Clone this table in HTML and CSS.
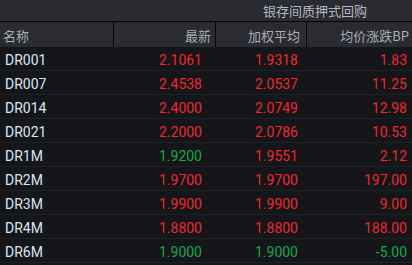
FILE: index.html
```html
<!DOCTYPE html>
<html lang="zh-CN">
<head>
<meta charset="utf-8">
<title>银存间质押式回购</title>
<link rel="stylesheet" href="styles.css">
</head>
<body>
<div class="board">
  <div class="group">
    <div class="group-blank"></div>
    <div class="group-title">银存间质押式回购</div>
  </div>
  <div class="head">
    <div class="h h-name">名称</div>
    <div class="h h-last">最新</div>
    <div class="h h-avg">加权平均</div>
    <div class="h h-bp">均价涨跌BP</div>
  </div>
  <div class="row"><div class="c name">DR001</div><div class="c last up">2.1061</div><div class="c avg up">1.9318</div><div class="c bp up">1.83</div></div>
  <div class="row"><div class="c name">DR007</div><div class="c last up">2.4538</div><div class="c avg up">2.0537</div><div class="c bp up">11.25</div></div>
  <div class="row"><div class="c name">DR014</div><div class="c last up">2.4000</div><div class="c avg up">2.0749</div><div class="c bp up">12.98</div></div>
  <div class="row"><div class="c name">DR021</div><div class="c last up">2.2000</div><div class="c avg up">2.0786</div><div class="c bp up">10.53</div></div>
  <div class="row"><div class="c name">DR1M</div><div class="c last down">1.9200</div><div class="c avg up">1.9551</div><div class="c bp up">2.12</div></div>
  <div class="row"><div class="c name">DR2M</div><div class="c last up">1.9700</div><div class="c avg up">1.9700</div><div class="c bp up">197.00</div></div>
  <div class="row"><div class="c name">DR3M</div><div class="c last up">1.9900</div><div class="c avg up">1.9900</div><div class="c bp up">9.00</div></div>
  <div class="row"><div class="c name">DR4M</div><div class="c last up">1.8800</div><div class="c avg up">1.8800</div><div class="c bp up">188.00</div></div>
  <div class="row"><div class="c name">DR6M</div><div class="c last down">1.9000</div><div class="c avg down">1.9000</div><div class="c bp down">-5.00</div></div>
</div>
</body>
</html>
```
FILE: styles.css
```css
html, body {
  margin: 0;
  padding: 0;
  background: #14161a;
}
body {
  font-family: Roboto, "Noto Sans", "Noto Sans CJK SC", sans-serif;
}
.board {
  width: 412px;
}
.group {
  display: grid;
  grid-template-columns: 215px 197px;
  height: 21px;
  background: #2a2a31;
  border-bottom: 1px solid #050506;
}
.group-title {
  font-family: "Noto Sans CJK SC", sans-serif;
  font-size: 13px;
  line-height: 21px;
  color: #b3b9c0;
  text-align: center;
  padding-left: 3px;
}
.head {
  display: grid;
  grid-template-columns: 113px 102px 91px 106px;
  height: 25px;
  background: #2b2b32;
}
.h {
  font-family: "Noto Sans CJK SC", sans-serif;
  font-size: 13px;
  line-height: 23px;
  padding-top: 2px;
  color: #a7aeb6;
  text-align: right;
  border-left: 1px solid #050506;
}
.h-name {
  border-left: none;
  text-align: left;
  padding-left: 3px;
}
.h-last { padding-right: 4px; }
.h-avg { padding-right: 6px; }
.h-bp { padding-right: 3px; }
.row {
  display: grid;
  grid-template-columns: 113px 102px 91px 106px;
  height: 24px;
  box-sizing: border-box;
  border-bottom: 1px solid #1e2126;
}
.c {
  font-size: 14px;
  line-height: 19px;
  padding-top: 4px;
  text-align: right;
  white-space: nowrap;
}
.name {
  text-align: left;
  padding-left: 5px;
  color: #dce5ee;
}
.last { padding-right: 13px; }
.avg { padding-right: 8px; }
.bp { padding-right: 5px; }
.up { color: #f0272f; }
.down { color: #19a84a; }
```
